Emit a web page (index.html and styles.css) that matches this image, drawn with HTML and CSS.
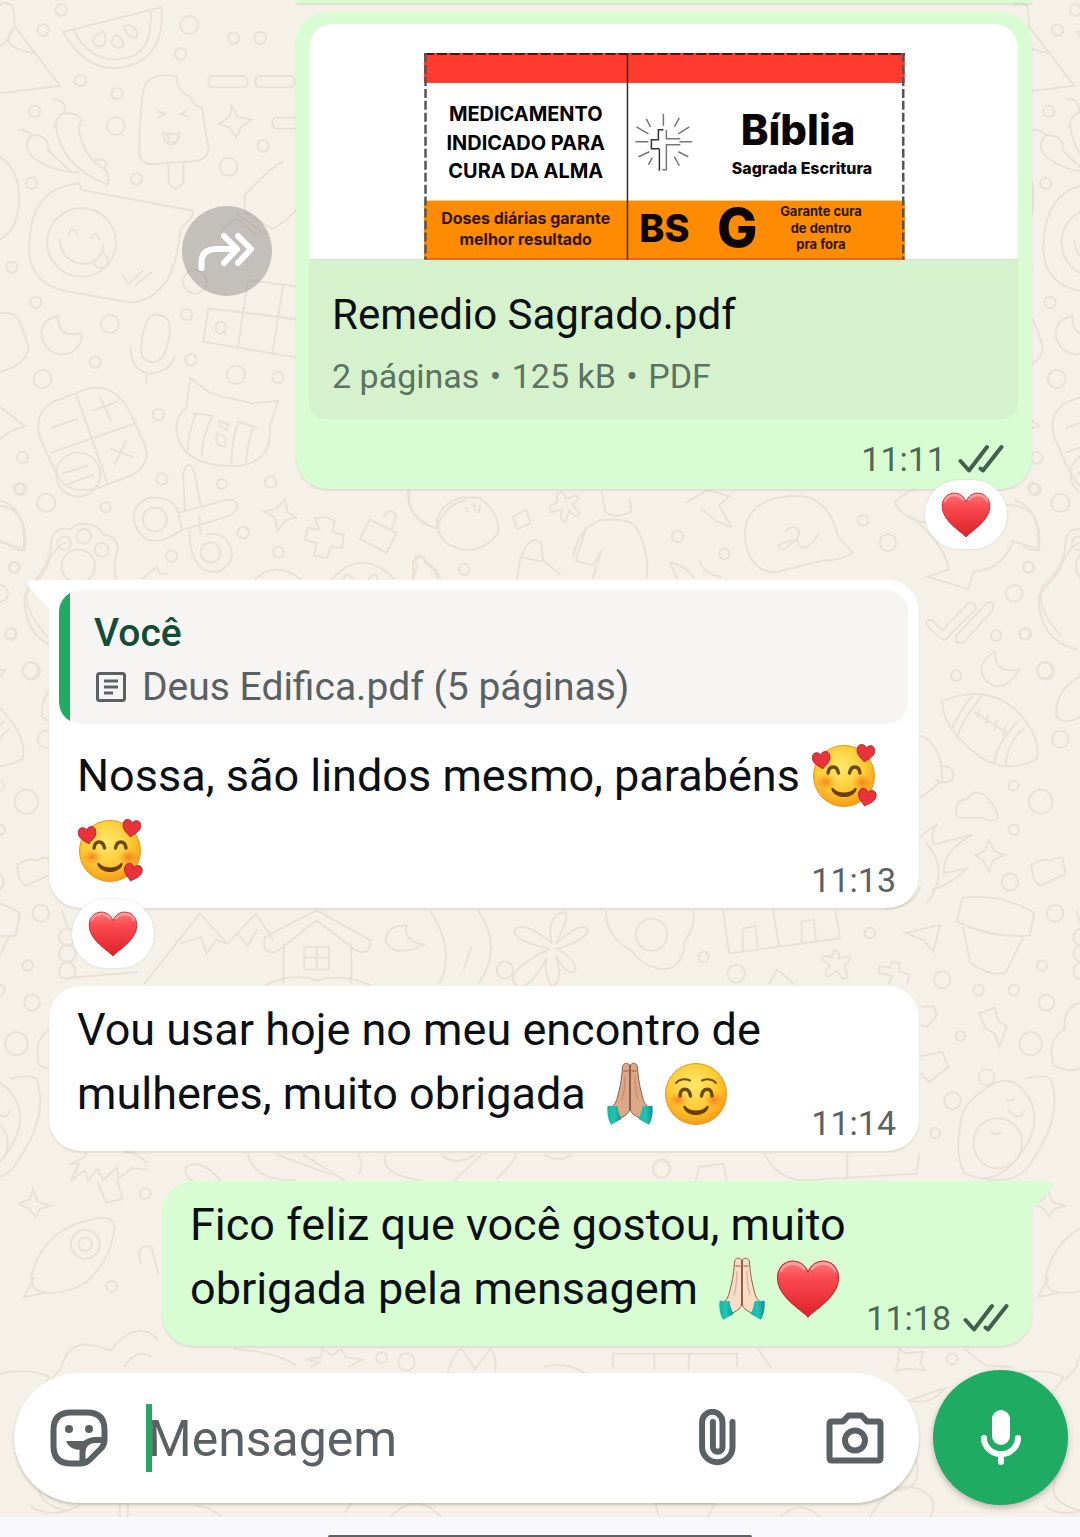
FILE: index.html
```html
<!DOCTYPE html>
<html lang="pt-BR">
  <head>
    <meta charset="UTF-8">
    <meta name="viewport" content="width=device-width, initial-scale=1">
    <title>Conversa</title>
    <link rel="stylesheet" href="styles.css">
  </head>

  <body>
    <!-- symbols used in the messages -->
    <svg class="symbols" width="0" height="0" aria-hidden="true">
      <defs>
        <linearGradient id="red" x1="0" y1="0" x2="0" y2="1">
          <stop offset="0" stop-color="#fb7a7a"/>
          <stop offset=".3" stop-color="#fb4b50"/>
          <stop offset="1" stop-color="#dd2027"/>
        </linearGradient>
        <radialGradient id="yellow" cx=".45" cy=".35" r=".65">
          <stop offset="0" stop-color="#ffe96b"/>
          <stop offset=".6" stop-color="#fecb33"/>
          <stop offset="1" stop-color="#f69d17"/>
        </radialGradient>
        <radialGradient id="blush">
          <stop offset="0" stop-color="#f7681c" stop-opacity=".75"/>
          <stop offset="1" stop-color="#f7811c" stop-opacity="0"/>
        </radialGradient>
        <linearGradient id="teal" x1="0" y1="0" x2="1" y2="0">
          <stop offset="0" stop-color="#17b3a8"/>
          <stop offset=".5" stop-color="#24c4b4"/>
          <stop offset="1" stop-color="#0d9089"/>
        </linearGradient>

        <symbol id="heart" viewBox="0 0 64 64">
          <path d="M32 60C27 54 1.500 40 1.500 21C1.500 10 9 4 17 4c7 0 12 4 15 11c3-7 8-11 15-11c8 0 15.500 6 15.500 17C62.500 40 37 54 32 60z" fill="url(#red)" stroke="#c72a30" stroke-width="1.200"/>
          <path d="M5 14c4-9 17-10 23-2M36 12c6-8 19-7 23 2" fill="none" stroke="#fff" stroke-opacity=".35" stroke-width="3" stroke-linecap="round"/>
        </symbol>

        <symbol id="small-heart" viewBox="0 0 64 64">
          <path d="M32 61C27 54 2 42 2 22C2 10 9 4 17 4c7 0 12 4 15 11c3-7 8-11 15-11c8 0 15 6 15 18C62 42 37 54 32 61z" fill="#e8323c" stroke="#b81f2b" stroke-width="3"/>
        </symbol>

        <symbol id="face" viewBox="0 0 64 64">
          <circle cx="32" cy="32" r="30.500" fill="url(#yellow)" stroke="#e9961c" stroke-width="1"/>
          <ellipse cx="14" cy="38" rx="10" ry="8" fill="url(#blush)"/>
          <ellipse cx="50" cy="38" rx="10" ry="8" fill="url(#blush)"/>
          <path d="M21 44c5 6 17 6 22 0c2-1 2 1 1 3c-5 8-19 8-24 0c-1-2-1-4 1-3z" fill="#6b3d09"/>
        </symbol>

        <symbol id="smile" viewBox="0 0 64 64">
          <use href="#face"/>
          <g fill="none" stroke="#6b4a12" stroke-linecap="round">
            <path d="M12 21c3-4 9-4.500 14-2.500M38 18.500c5-2 11-1.500 14 2.500" stroke-width="2"/>
            <path d="M16 34c0-9 9-9 10.500 0M37.500 34c1.500-9 10.500-9 10.500 0" stroke-width="3.500"/>
          </g>
        </symbol>

        <symbol id="hearts-face" viewBox="0 0 64 64">
          <use href="#face"/>
          <g fill="none" stroke="#6b4a12" stroke-width="3.500" stroke-linecap="round">
            <path d="M16 29c1-8 9-8 10.500 0M37.500 29c1.500-8 9.500-8 10.500 0"/>
          </g>
          <use href="#small-heart" x="0" y="7" width="19" height="19" transform="rotate(-8 9 16)"/>
          <use href="#small-heart" x="44" y="0" width="19" height="19" transform="rotate(8 54 9)"/>
          <use href="#small-heart" x="45" y="44" width="19" height="19" transform="rotate(14 54 54)"/>
        </symbol>

        <!-- skin takes the current text colour -->
        <symbol id="hands" viewBox="0 0 64 64">
          <path d="M31.500 3c-2-3-6.500-2-7 2c-1 15-3 22-5 30c-1 5-3 8-6 10l7 12c6-3 10-5 11-9z" fill="currentColor" stroke="#8d6046" stroke-width="1"/>
          <path d="M32.500 3c2-3 6.500-2 7 2c1 15 3 22 5 30c1 5 3 8 6 10l-7 12c-6-3-10-5-11-9z" fill="currentColor" stroke="#8d6046" stroke-width="1"/>
          <path d="M32 4v45M25.500 9h5M33.500 9h5" fill="none" stroke="#8d6046" stroke-opacity=".7" stroke-width="1.500"/>
          <path d="M27 14c0 8 0 14-3 24M37 14c0 8 0 14 3 24" fill="none" stroke="#8d6046" stroke-opacity=".3" stroke-width="1.500"/>
          <path d="M9.500 44q1-1 2 0l8 0q1 8 4 13l-9 5q-1 1-2 0q-4-8-3-18z" fill="url(#teal)"/>
          <path d="M54.500 44q-1-1-2 0l-8 0q-1 8-4 13l9 5q1 1 2 0q4-8 3-18z" fill="url(#teal)"/>
        </symbol>

        <symbol id="checks" viewBox="0 0 46 30">
          <path d="M2.500 17l8.500 9.500L29 3M22.500 24.500l2.500 2L43.500 3" fill="none" stroke="currentColor" stroke-width="4" stroke-linecap="round" stroke-linejoin="round"/>
        </symbol>
      </defs>
    </svg>

    <!-- wallpaper -->
    <svg class="wallpaper" viewBox="0 0 1080 1537" preserveAspectRatio="xMidYMin slice" aria-hidden="true">
      <g id="tile">
        <g transform="scale(.3333)">
          <path d="M190 95L485 22q10 120-70 165q-140 60-225-92zM220 88q60 120 180 80q60-30 52-140M282 130q-10-20 28-36q20 40-10 44q-15 3-18-8M335 125q5-15 12-21q35 22 20 38q-30 5-32-17M372 80q15-12 35 8q15 25-10 25q-20-8-25-33"/>
          <path d="M530 228q-70-10-90 20q-18 15-22 215q5 30 40 30l130-10q35-5 38-35l-20-128q-20 5-36-30q-40-15-40-62zM506 492v55q20 35 44 0v-57M472 332l24 10-24 12M562 330l-20 12 22 7M488 398q25 8 52 0q-5 38-28 36q-20-4-24-36M505 405v15q15 15 28 0v-15"/>
          <path d="M625 245q0-17 16-17h86q16 0 16 17t-16 17h-86q-16 0-16-17zM766 245q0-17 16-17h86q16 0 16 17t-16 17h-86q-16 0-16-17zM890 352h-56q-16 0-16 17t16 17h56M695 318l18 32 42 9-32 22-14 32-20-30-32-12 32-20z"/>
          <path d="M158 298q40-5 36 40q40 0 54 22q-10 5-10 30q10 80 80 120q10 20 6 44q-150-60-156-186q5-25 30-30M168 372l-6 12M55 390q30 0 40 15q55 0 50 45q40 40 70 66M95 405q-35 40 15 75q50 35 130 38M285 480q30-5 36 10l-10 18"/>
          <path d="M245 570L580 632q5 15-38 54q-10 100-40 155q-50 70-120 65l-190-34q-120-30-102-160q10-150 150-162zM205 708q8-40 28-5M272 716q16-30 26 5M180 718q5 70 75 74q50-5 55-58M278 780q10 30 35 22q15-5 10-28l-20-25M368 826l18 26 45-42M405 858l50-42"/>
          <circle cx="245" cy="727" r="103"/><circle cx="585" cy="845" r="35"/>
          <path d="M850 485q-30 10-116 100v50l80 50q20 0 80-60M710 640l90 65M665 690l45-35 60 50M625 925l420 50-20 120-415-70zM745 840l-32 205M850 855l-33 210M745 840l300 40M732 938l300 40M648 972q30-18 30 15q-15 25-30 5zM668 990l12 14"/>
          <path d="M175 948q-55 10-50 65q25 65 90 45q40-30 28-60q-70 20-68-50zM442 960q20-30 60-5q20 30-10 110q-30 40-65 5q-10-40 15-110zM392 1040q0 75 60 80q60-5 72-52M440 1122v28"/>
          <path d="M160 1205l70-26q80-40 130 15q20 10 70 130q30 60-30 100l-70 26q-90 40-140 0q-20-20-70-140q-20-70 40-105zM230 1185l92 262M152 1358l260-90M156 1283l80-28M278 1232l76-28M300 1190l34 74M330 1345l70 26M380 1320l-36 74M188 1420l76-24M198 1455l84-32"/>
          <circle cx="235" cy="1423" r="66"/>
          <path d="M572 1135l60 45 125 30 78-8-26 80q10 100-90 115q-180 10-190-115q0-35 30-60zM580 1238l60 10M715 1265l60 20M588 1240q-24 60-24 110M636 1250q-30 60-30 120M715 1265q-20 60-20 125M760 1280q-20 60-22 110M658 1262l30 12-10 14q-20-5-20-26M652 1300q35 5 22 40q-35-5-22-40z"/>
          <path d="M0 18q5-18 40 0l5 60q-30 60-45 60M45 80L180 257 0 280M45 80q-60 60 60 80M0 470q60 40 58 130q-4 90-58 118M0 940q50-10 66 40l20 60q0 50-86 76M0 1220l75 58q-40 10-75 40"/>
          <circle cx="184" cy="30" r="17"/><circle cx="130" cy="90" r="17"/><circle cx="568" cy="75" r="27"/><circle cx="701" cy="114" r="17"/><circle cx="781" cy="114" r="18"/><circle cx="542" cy="162" r="17"/><circle cx="241" cy="241" r="17"/><circle cx="352" cy="281" r="17"/><circle cx="104" cy="334" r="17"/><circle cx="348" cy="378" r="27"/><circle cx="790" cy="438" r="17"/><circle cx="686" cy="500" r="27"/><circle cx="410" cy="537" r="17"/><circle cx="95" cy="550" r="17"/><circle cx="36" cy="801" r="17"/><circle cx="108" cy="907" r="17"/><circle cx="330" cy="972" r="27"/><circle cx="560" cy="943" r="17"/><circle cx="286" cy="1086" r="17"/><circle cx="573" cy="1079" r="17"/><circle cx="128" cy="1137" r="27"/><circle cx="708" cy="1124" r="27"/><circle cx="834" cy="1132" r="17"/><circle cx="475" cy="1244" r="17"/><circle cx="486" cy="1437" r="17"/><circle cx="666" cy="1452" r="15"/><circle cx="812" cy="1446" r="17"/><circle cx="68" cy="1373" r="17"/><circle cx="63" cy="1468" r="17"/>
        </g>
        <g transform="translate(0 480) scale(.3333)">
          <path d="M550-20l5 110M583-25l20 100M550-20q15-50 33-5M535 98l150-40q28 0 28 22q-5 20-28 28l-138 42zM535 98q-10-50-85-45q-60 20-45 80q30 70 100 40l45-25M568 150l4 50q20 90 90 72q60-40 15-95q-20-20-60-15M598 105l4 58M0 60q80 20 72 150q-40 0-50-20l-22-3"/>
          <circle cx="465" cy="118" r="36"/><circle cx="632" cy="217" r="30"/><circle cx="235" cy="258" r="50"/><circle cx="193" cy="189" r="20"/><circle cx="252" cy="168" r="22"/><circle cx="305" cy="209" r="21"/>
          <path d="M348 298q-10-50 6-90q0-40-45-45q-10-30-60-32q-20 0-36 16q-60-10-60 50q0 60-70 125q-20 60 60 148M425 298l45-38 10 20 24 0M765 298q60-60 140 0M995 298q90-100 190 0M1030 298q10-30 30 0M1105 298q20-30 30 0"/>
          <path d="M855 57l8 38 25 18-32 8-22 30-10-40-32-18 36-6zM945 115l30-6 30 14-8 32 34 8-4 40-34-4-12 34-38-8 6-36-34-10 8-36 36 6zM1110 118l80 40-30 60-80-42zM1150 110q20-30 38-6q0 20-14 44M1245 230q15-10 25 2l8 20q30 15 36 46M1245 230q0 20 6 28l-12 40M1225 30q-10 80 85 115q30-80 90-85"/>
          <circle cx="139" cy="68" r="27"/><circle cx="317" cy="81" r="15"/><circle cx="730" cy="157" r="17"/><circle cx="515" cy="228" r="17"/><circle cx="836" cy="216" r="16"/><circle cx="44" cy="262" r="16"/><circle cx="34" cy="461" r="17"/><circle cx="95" cy="572" r="26"/><circle cx="0" cy="340" r="25"/>
        </g>
        <g transform="translate(400 480) scale(.4337 .4464)">
          <path d="M20 22q0 80 70 84M85 90q20-60 100-50q50 40 40 80q-50 60-120 20q-20-20-20-50M150 60l8 12M170 52l4 18M185 56l-4 18M260 82l30-16 12 30-32 14zM362 32q15-14 20 10l24-8q14 8-8 20l16 20q-8 14-24-6l-8 24q-18 0-8-26l-26 6q-10-12 14-22zM465 25l8 45q20 20 60 0l-4-30M400 170q10-60 60-80q80-10 92 30q24 50 16 100M430 105l-25 75 40 12 20-36-20 64M280 170q20-50 45-30l5 40 40 32M270 222l8-50 50 10M30 222v-40q20-20 30 0q30 20 34 40M660 50l50-28 50 14-25 20 30 50-36-14-36-30M620 185q30 0 60 35M690 180q10 30 50 36M640 222l-18-36"/>
          <path d="M800 90q30-60 130-54q60 10 80 90l34 36q-30 20-70 18l-100 24q-40 10-66-30q-20-40-8-84M888 115q20-20 32 0q0 20-22 30q-20 20-26 0q50-20 46 0q20 20 48-26M1140 50q30-30 80-40M1140 50q20 40 80 46M1175 80q80 60 90 120l-48 16 92 28 14-40q60 0 90-64M1395 55q90 0 78 100l-65-20"/>
          <path d="M1212 322q12-20 26 4l12 10 62-62q20 0 14 16l-70 68q-10 0-44-36zM1282 348l70-72q20-10 14 16l-68 72q-20 5-16-16zM1372 384q-50 30-22 64q40 36 78-24q-60 10-56-40zM1250 495q100-40 170 20q60 60 48 110q-80 40-150-20q-70-60-68-110zM1342 482q-50 60-58 96M1320 482q-40 50-48 78M1440 555q-40 30-44 84M1425 540q-50 50-56 94M1322 518l80 50M1336 512l-6 20M1356 525l-6 22M1376 538l-6 22M1396 550l-6 22M1568 140q-30 10-46 60l-50 60q0 100 90 120M1568 440q-60 30-55 90q20 20 55 0"/>
          <path d="M1282 738q0-22 26-24q20-30 48 0q20 20 22 44q-20 10-36-2l-50 0q-14-4-10-18zM1358 806l12 24 22 10-26 12-8 26-12-24-20-14 22-10zM1460 860q20-14 40-8q20-10 28-4l6 34-58 26q-20-10-20-48zM1200 572q50 20 50 100l-50 40M1250 640q30 0 24 30q-20 14-40 0M1200 800q20-20 40-30q-20 20-10 46l90-22q-70 36-66 86l52-10q-40 40-80 46M1212 810q60 70 0 140M1120 960q60 0 80-50"/>
          <path d="M1296 935q90-10 166 34l-10 50q-80 10-168-30zM1298 1000l16 80q40 30 82 24l42-84M1165 1014l80-18-16 60-22-26z"/>
          <path d="M745 965l14 95 255-34-10-60M860 965l14 80M790 1054v-50l30-6 5 50M926 1036v-48l28-4 5 48M475 965q0 60 60 90q30 40 80 40q40-10 40-60q30-40 20-70M345 1050q-90-20-80-44q20-20 84 30q-10-60 28-68q20 0-18 70q60-50 72-34q10 20-68 46q50 30 40 50q-20 10-44-36q20 60-10 70q-20-40-10-64q-40 70-68 64q-40-30 74-84M70 965q60 90 20 165M180 965q60 80 0 165M165 1045l-18 50M850 1130l20-34 40 34M1000 1053q14 0 12 18l22-4q10 8-10 18l8 28q-10 12-24-14l-22 14q-14-8 6-26l-20-14q0-12 24-4zM1125 1130l10-20-30-6 0-16 24 4 8-14 14 4 0 18 24 8-6 22"/>
          <path d="M1335 1195l36-14 8 30 20 12-18 46-10-30-20-10zM1200 1180l30-2 8 20-22 26-16-4M1200 1290l50-10 14 34-44 34-20-20M1568 1170q-40 10-36 60q-40 20-26 80q40 20 62 5M1290 1460q0-60 50-90q60-50 100 0q50 60-10 140q-60 80-130 40q-20-40-10-90zM1500 1340q30 80-40 180q-30 60-120 44M1440 1340q40-10 60 0M1395 1385q10 10 22 0M1400 1410q30 30 40 0M1360 1460q20 10 26 0"/>
          <circle cx="1378" cy="1485" r="56"/><circle cx="580" cy="1018" r="36"/>
          <circle cx="640" cy="126" r="13"/><circle cx="748" cy="165" r="12"/><circle cx="1068" cy="90" r="12"/><circle cx="1125" cy="140" r="19"/><circle cx="148" cy="200" r="12"/><circle cx="1460" cy="18" r="12"/><circle cx="1448" cy="195" r="12"/><circle cx="1374" cy="348" r="12"/><circle cx="1440" cy="345" r="12"/><circle cx="1282" cy="438" r="12"/><circle cx="1486" cy="426" r="18"/><circle cx="1522" cy="580" r="19"/><circle cx="1414" cy="684" r="11"/><circle cx="1477" cy="720" r="27"/><circle cx="1415" cy="783" r="12"/><circle cx="1406" cy="900" r="19"/><circle cx="1510" cy="970" r="19"/><circle cx="1083" cy="1014" r="12"/><circle cx="1480" cy="1087" r="12"/><circle cx="1250" cy="1119" r="19"/><circle cx="1334" cy="1142" r="12"/><circle cx="1415" cy="1142" r="12"/><circle cx="1490" cy="1170" r="18"/><circle cx="1292" cy="1245" r="11"/><circle cx="1454" cy="1262" r="26"/><circle cx="1352" cy="1337" r="18"/><circle cx="1274" cy="1390" r="19"/><circle cx="1234" cy="1462" r="11"/><circle cx="700" cy="1068" r="12"/><circle cx="775" cy="1105" r="20"/><circle cx="242" cy="1097" r="19"/><circle cx="603" cy="1542" r="20"/>
        </g>
        <g transform="translate(0 900) scale(.6888 .3333)">
          <path d="M210 250l80-210 40 90 42-90 25 80M262 130l30-20 8 50 14-40 16 10M345 100l15 36 14-50M385 110l75-80 78 90q0 50-22 30l-56-90-58 94q-24 10-17-44zM412 130v120M510 130v120M442 140h36v68h-36zM460 140v68M442 172h36M385 255q40-40 75-15q40-20 78 15M590 75q-30 0-30 50q15 50 55 8q-30-10-25-58zM90 235l110-20M90 30l10 60"/>
          <ellipse cx="98" cy="110" rx="12" ry="25"/><ellipse cx="98" cy="160" rx="12" ry="25"/><ellipse cx="98" cy="212" rx="12" ry="25"/>
          <path d="M100 790q30-20 24-34M215 790q-20-40-35-34M100 790l15 0-12 50 20-30 5 30 14-34 8 34 20-40 2 34 20-30 24 4M142 845l12 62 24-10-8-60M48 866l8 40 18 10-16 10-6 24-10-26-14-14 16-14zM48 1110q20-130 90-155q30-10 28 30q-4 90-40 160q-40 50-72 25q-12-20-6-60zM50 1130l-15 60 30-12M205 1090q-10-60 15-50l10 80M270 800q20-30 50 40l-5 30q-50-20-45-70M360 762q10 80 70 78M440 762l60 78M400 762l80 60M520 762q10 40 0 60M560 762q-10 60 50 78M640 762q20 40 50 0M700 762l-40 78M750 762q-10 40-30 76M790 762q20 30 40 0M1010 840l5-40 35-10 5 50M1110 762q20 80 60 78l160-20 5-58M1230 762v70M0 1420q40-20 72 10l-20 60"/>
          <ellipse cx="124" cy="1032" rx="21" ry="43"/><ellipse cx="124" cy="1032" rx="10" ry="20"/>
          <path d="M90 1400q10-100 70-50q40-100 70-30M90 1400l-16 40M180 1400q20-60 40-30M340 1345q60 10 90 50M450 1400l14-14-20-10 22-6 2-24 14 20 14-20 6 24 24 8-20 22M650 1415q10-60 20-70l20 60 22-60q10 20 6 70M790 1400q30-20 60 20M890 1400v-40h180v40M950 1360v50M1000 1360v50M1100 1345l20 60M1305 1345l10 14 25-4-4 34 6 20-28-4-14 6 4-30zM1400 1345l30 50 40 6"/>
          <ellipse cx="211" cy="880" rx="8" ry="16"/><ellipse cx="162" cy="1158" rx="8" ry="16"/><ellipse cx="960" cy="806" rx="12" ry="26"/><ellipse cx="554" cy="1372" rx="8" ry="16"/><ellipse cx="590" cy="1385" rx="12" ry="26"/><ellipse cx="1382" cy="1376" rx="8" ry="16"/>
        </g>
        <path d="M30 1505q20 15 50 0M120 1500v18M128 1500v18M195 1505q20 2 28 14M345 1512l10-14M390 1517q25-28 52 0M655 1503h60l-8 14h-48zM780 1517q20-20 40 0M870 1517q20-40 50-28q20 10 10 28M895 1490q30 0 20-34M910 1400q25-10 35-12q-15 18-35 12zM1060 1470q-20 30 20 40"/>
      </g>
      <use href="#tile" x="-1014"/>
      <use href="#tile" x="1014"/>
    </svg>

    <main class="chat">
      <div class="bubble bubble-out bubble-doc bubble-prev"></div>

      <div class="row row-out">
        <button class="forward-btn" type="button" aria-label="Encaminhar">
          <svg width="58" height="40" viewBox="0 0 58 40" aria-hidden="true"><path d="M3.500 37V32Q3.500 18 18 18H39M26 5L39 18 26 32M40 5L53 18 40 32"/></svg>
        </button>

        <article class="bubble bubble-out bubble-doc">
          <a class="doc" href="#">
            <span class="doc-preview">
              <svg class="label" viewBox="0 0 482 207" role="img" aria-label="Rótulo Remedio Sagrado">
                <rect width="482" height="207" fill="#fff"/>
                <rect width="482" height="30" fill="#ff3b30"/>
                <rect y="148" width="482" height="59" fill="#ff8c00"/>
                <path d="M0 206.500H482" stroke="#f4432c" stroke-width="1.500"/>
                <path d="M204 0V207" stroke="#3a2a2a" stroke-width="1.500"/>
                <path d="M0 1H482" stroke="#4a1512" stroke-width="2" stroke-dasharray="10 3"/>
                <path d="M1.500 0V207M480.500 0V207" stroke="#555" stroke-width="2.500" stroke-dasharray="9 3"/>
                <g class="label-title">
                  <text x="102" y="68">MEDICAMENTO</text>
                  <text x="102" y="97">INDICADO PARA</text>
                  <text x="102" y="125">CURA DA ALMA</text>
                </g>
                <g class="label-dose">
                  <text x="102" y="171">Doses diárias garante</text>
                  <text x="102" y="193">melhor resultado</text>
                </g>
                <g fill="none" stroke="#777" stroke-width="1.500">
                  <path d="M236 118V96M236 96h-8v-9h7V77h5" stroke="#333"/>
                  <path d="M243 77v9h14M257 92h-14v25h-4"/>
                  <path d="M240 61v12M223 66l4 8M256 65l-5 9M213 74l12 7M266 74l-11 7M212 89h13M256 89h13M215 104l11-5M265 104l-10-5M225 112l4-7M256 113l-5-9"/>
                </g>
                <g class="label-name">
                  <text x="375" y="92" font-size="42">Bíblia</text>
                  <text x="379" y="121" font-size="16">Sagrada Escritura</text>
                  <text x="241" y="190" font-size="38">BS</text>
                  <text x="314" y="195" font-size="54">G</text>
                </g>
                <g class="label-note">
                  <text x="398" y="163">Garante cura</text>
                  <text x="398" y="180">de dentro</text>
                  <text x="398" y="197">pra fora</text>
                </g>
              </svg>
            </span>
            <span class="doc-info">
              <span class="doc-name">Remedio Sagrado.pdf</span>
              <span class="doc-meta">2 páginas <span class="dot">•</span> 125 kB <span class="dot">•</span> PDF</span>
            </span>
          </a>
          <div class="stamp"><time>11:11</time><svg class="checks"><use href="#checks"/></svg></div>
          <button class="reaction" type="button" aria-label="Reação: coração"><svg><use href="#heart"/></svg></button>
        </article>
      </div>

      <article class="bubble bubble-in bubble-reply tail-in">
        <blockquote class="quote">
          <strong>Você</strong>
          <span class="quote-file">
            <svg width="34" height="34" viewBox="0 0 34 34" aria-hidden="true"><rect x="3.500" y="3.500" width="27" height="27" rx="2"/><path d="M10 11h14M10 17h14M10 23h9"/></svg>
            Deus Edifica.pdf (5 páginas)
          </span>
        </blockquote>
        <div class="content content-tall">
          <p>Nossa, são lindos mesmo, parabéns <svg class="emoji"><use href="#hearts-face"/></svg><wbr><svg class="emoji"><use href="#hearts-face"/></svg></p>
          <div class="stamp"><time>11:13</time></div>
        </div>
        <button class="reaction reaction-left" type="button" aria-label="Reação: coração"><svg><use href="#heart"/></svg></button>
      </article>

      <article class="bubble bubble-in">
        <div class="content">
          <p>Vou usar hoje no meu encontro de mulheres, muito obrigada <svg class="emoji skin-medium"><use href="#hands"/></svg><svg class="emoji"><use href="#smile"/></svg></p>
          <div class="stamp"><time>11:14</time></div>
        </div>
      </article>

      <article class="bubble bubble-out tail-out">
        <div class="content">
          <p>Fico feliz que você gostou, muito obrigada pela mensagem <svg class="emoji skin-light"><use href="#hands"/></svg><svg class="emoji"><use href="#heart"/></svg></p>
          <div class="stamp"><time>11:18</time><svg class="checks"><use href="#checks"/></svg></div>
        </div>
      </article>
    </main>

    <form class="composer">
      <div class="composer-box">
        <button type="button" aria-label="Figurinhas">
          <svg width="58" height="58" viewBox="0 0 58 58" aria-hidden="true">
            <path d="M54.500 31V21Q54.500 3.500 37 3.500H21Q3.500 3.500 3.500 21V37Q3.500 54.500 21 54.500H31Q36 54.500 40 50.500L50.500 40Q54.500 36 54.500 31H45Q32.500 32 32.500 43V54"/>
            <g class="solid"><circle cx="19" cy="20" r="4"/><circle cx="39" cy="20" r="4"/><path d="M16 32H38L32 41Q19 41 16 32z"/></g>
          </svg>
        </button>
        <input class="message-input" type="text" placeholder="Mensagem" aria-label="Mensagem">
        <button type="button" aria-label="Anexar">
          <svg width="38" height="58" viewBox="0 0 38 58" aria-hidden="true"><path d="M33.500 13V38a15.200 15.200 0 0 1-30.400 0V13a10.200 10.200 0 0 1 20.400 0V38a4.800 4.800 0 0 1-9.600 0V13"/></svg>
        </button>
        <button type="button" aria-label="Câmera">
          <svg width="58" height="54" viewBox="0 0 58 54" aria-hidden="true"><path d="M6 10.500H17L22.500 4.500H35.500L41 10.500H52Q54.500 10.500 54.500 13V47Q54.500 49.500 52 49.500H6Q3.500 49.500 3.500 47V13Q3.500 10.500 6 10.500z"/><circle cx="29" cy="29.500" r="10"/></svg>
        </button>
      </div>
      <button class="mic-btn" type="button" aria-label="Gravar áudio">
        <svg width="40" height="56" viewBox="0 0 40 56" aria-hidden="true"><rect class="solid" x="11" y="0" width="18" height="35" rx="9"/><path d="M3 28a17 16 0 0 0 34 0M20 44V52"/></svg>
      </button>
    </form>

    <footer class="nav-bar"><span class="nav-handle"></span></footer>
  </body>
</html>
```
FILE: styles.css
```css
* {
  box-sizing: border-box;
}

body {
  position: relative;
  display: flex;
  flex-direction: column;
  min-height: 100vh;
  margin: 0;
  overflow-x: hidden;
  background: #f5f1e9;
  color: #0b1014;
  font-family: Roboto, "Noto Sans", sans-serif;
}

button {
  display: flex;
  padding: 0;
  border: 0;
  background: none;
  cursor: pointer;
}

p {
  margin: 0;
}

.symbols {
  position: absolute;
}

.wallpaper {
  position: absolute;
  inset: 0;
  z-index: -1;
  width: 100%;
  height: 100%;
  fill: none;
  stroke: #eae1d6;
  stroke-width: 2;
}

.wallpaper path,
.wallpaper circle,
.wallpaper ellipse {
  vector-effect: non-scaling-stroke;
}

/* messages */
.chat {
  display: flex;
  flex: 1;
  flex-direction: column;
  align-items: flex-start;
  padding: 0 48px 24px 49px;
}

.bubble {
  position: relative;
  width: 100%;
  max-width: 870px;
  border-radius: 32px;
  background: #fff;
  box-shadow: 0 2px 2px rgba(60, 50, 30, 0.1);
}

.bubble-out {
  align-self: flex-end;
  background: #d8fdd2;
}

.bubble-doc {
  max-width: 736px;
  padding: 12px 14px 0 13px;
}

.bubble-prev {
  height: 3px;
  margin-bottom: 9px;
  padding: 0;
  border-radius: 0 0 32px 32px;
}

.row {
  display: flex;
  align-items: center;
  gap: 24px;
  width: 100%;
  margin-bottom: 91px;
}

.row-out {
  justify-content: flex-end;
}

.row .bubble {
  align-self: auto;
}

.bubble-in {
  margin-bottom: 30px;
}

.bubble-reply {
  margin-bottom: 78px;
  padding-top: 10px;
  border-top-left-radius: 0;
}

.tail-out {
  border-top-right-radius: 0;
}

.tail-in::before,
.tail-out::before {
  content: "";
  position: absolute;
  top: 0;
  width: 21px;
  height: 28px;
}

.tail-in::before {
  right: 100%;
  background: #fff;
  clip-path: polygon(14% 0, 100% 0, 100% 100%, 0 20%, 0 8%);
}

.tail-out::before {
  left: 100%;
  background: #d8fdd2;
  clip-path: polygon(0 0, 86% 0, 100% 8%, 100% 20%, 0 100%);
}

.forward-btn {
  flex: none;
  align-items: center;
  justify-content: center;
  width: 90px;
  height: 90px;
  border-radius: 50%;
  background: rgba(120, 120, 120, 0.4);
}

.forward-btn svg {
  fill: none;
  stroke: #fff;
  stroke-width: 6;
  stroke-linecap: round;
  stroke-linejoin: round;
}

/* attached document */
.doc {
  display: block;
  overflow: hidden;
  border-radius: 24px 24px 16px 16px;
  background: #d5f2cd;
  color: inherit;
  text-decoration: none;
}

.doc-preview {
  display: flex;
  justify-content: center;
  padding: 29px 0 0 2px;
  border-bottom: 1px solid #cfe3ca;
  background: #fff;
}

.label {
  width: 68%;
  overflow: visible;
  font-family: Inter, "Open Sans", sans-serif;
  font-weight: 700;
  text-anchor: middle;
}

.label-title {
  font-size: 20px;
}

.label-dose {
  fill: #2b1500;
  font-size: 16px;
}

.label-name {
  fill: #0c0505;
  font-weight: 800;
}

.label-note {
  fill: #2b1500;
  font-size: 13px;
}

.doc-info {
  display: flex;
  flex-direction: column;
  gap: 12px;
  padding: 30px 24px 19px 23px;
}

.doc-name {
  font-size: 42px;
  line-height: 50px;
}

.doc-meta {
  color: #5c7361;
  font-size: 34px;
  line-height: 48px;
}

.dot {
  padding: 0 2px;
}

.stamp {
  display: flex;
  align-items: center;
  justify-content: flex-end;
  gap: 12px;
  color: #5b6063;
  font-size: 34px;
  line-height: 40px;
}

.bubble-out .stamp {
  color: #4d6857;
}

.bubble-doc .stamp {
  padding: 20px 14px 10px 0;
}

.checks {
  width: 46px;
  height: 30px;
  color: #435f50;
}

.reaction {
  position: absolute;
  right: 25px;
  bottom: -60px;
  align-items: center;
  justify-content: center;
  width: 82px;
  height: 69px;
  border-radius: 34px;
  background: #fff;
  box-shadow: 0 0 2px rgba(60, 50, 30, 0.2);
}

.reaction-left {
  right: auto;
  left: 23px;
}

.reaction svg {
  width: 50px;
  height: 50px;
}

/* text of a message, with the time over its lower right corner */
.content {
  display: grid;
  padding: 12px 23px 8px 28px;
  font-size: 45px;
  line-height: 64px;
}

.content > * {
  grid-area: 1 / 1;
}

.content p {
  padding: 0 12px 17px 0;
}

.content .stamp {
  align-self: end;
  justify-self: end;
}

.content-tall {
  padding-top: 14px;
  line-height: 75px;
}

.content-tall p {
  padding-bottom: 12px;
}

.emoji {
  width: 66px;
  height: 64px;
  vertical-align: -17px;
}

.skin-medium {
  color: #dca887;
}

.skin-light {
  color: #f8dcc8;
}

.quote {
  display: flex;
  flex-direction: column;
  gap: 6px;
  margin: 0 11px 0 10px;
  padding: 19px 24px 13px 35px;
  border-radius: 22px;
  background: linear-gradient(#1fab61, #1fab61) 0 0 / 11px 100% no-repeat #f6f5f4;
  font-size: 39px;
  line-height: 48px;
}

.quote strong {
  color: #144d37;
  font-weight: 500;
}

.quote-file {
  display: flex;
  align-items: center;
  gap: 14px;
  color: #5b6063;
}

.quote-file svg {
  flex: none;
  fill: none;
  stroke: #5b6063;
  stroke-width: 3;
}

/* message box */
.composer {
  display: flex;
  align-items: center;
  gap: 14px;
  padding: 0 12px 12px 14px;
}

.composer-box {
  display: flex;
  flex: 1;
  align-items: center;
  min-width: 0;
  height: 130px;
  padding: 0 35px 0 36px;
  border-radius: 65px;
  background: #fff;
  box-shadow: 0 2px 3px rgba(60, 50, 30, 0.25);
}

.composer svg {
  fill: none;
  stroke: #5b6063;
  stroke-width: 6;
  stroke-linecap: round;
  stroke-linejoin: round;
}

.composer .solid {
  fill: #5b6063;
  stroke: none;
}

.message-input {
  flex: 1;
  min-width: 0;
  height: 68px;
  margin: 0 0 0 38px;
  padding: 3px 0 0 2px;
  border: 0;
  outline: 0;
  background: linear-gradient(#1fab61, #1fab61) 0 0 / 6px 100% no-repeat;
  color: #0b1014;
  font: 50px Roboto, "Noto Sans", sans-serif;
}

.message-input::placeholder {
  color: #5b6063;
  opacity: 1;
}

.composer-box button + button {
  margin-left: 89px;
}

.mic-btn {
  flex: none;
  align-items: center;
  justify-content: center;
  width: 135px;
  height: 135px;
  border-radius: 50%;
  background: #1fab61;
  box-shadow: 0 3px 6px rgba(60, 50, 30, 0.3);
}

.composer .mic-btn svg {
  stroke: #fff;
}

.composer .mic-btn .solid {
  fill: #fff;
}

.nav-bar {
  display: flex;
  align-items: flex-end;
  justify-content: center;
  height: 20px;
  background: #f8f8fb;
}

.nav-handle {
  width: 424px;
  height: 2px;
  border-radius: 2px 2px 0 0;
  background: #606062;
}
```
